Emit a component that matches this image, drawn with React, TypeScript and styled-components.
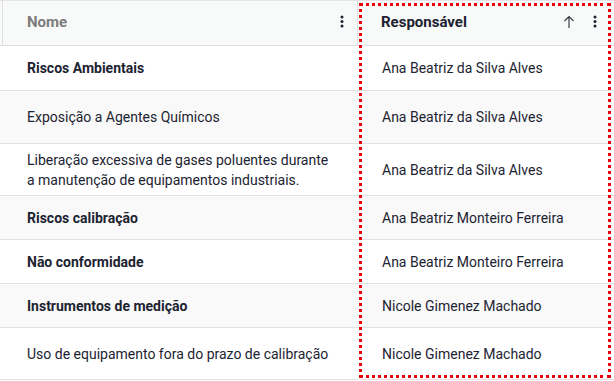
import React from "react";
import styled, { createGlobalStyle } from "styled-components";

const GlobalStyle = createGlobalStyle`
  body {
    margin: 0;
    background: #ffffff;
    font-family: Roboto, "Liberation Sans", sans-serif;
  }
`;

const GridWrapper = styled.div`
  position: relative;
  width: 614px;
  height: 381px;
  overflow: hidden;
  background: #ffffff;
`;

const HeaderRow = styled.div`
  display: grid;
  grid-template-columns: 356px 1fr;
  height: 46px;
  box-sizing: border-box;
  padding-left: 2px;
  background: #f8f9f9;
  border-top: 1px solid #e4e4e4;
  border-bottom: 1px solid #e0e0e0;
`;

const HeaderCell = styled.div<{ $sorted?: boolean; $first?: boolean }>`
  display: flex;
  align-items: center;
  gap: 8px;
  padding: 0 ${(p) => (p.$first ? 6 : 10)}px 3px ${(p) => (p.$first ? 24 : 23)}px;
  border-left: ${(p) => (p.$first ? "1px solid #e0e0e0" : "none")};
  border-right: ${(p) => (p.$first ? "1px solid #e0e0e0" : "none")};
  font-size: 15px;
  font-weight: 700;
  color: ${(p) => (p.$sorted ? "#1b2130" : "#7b7b7b")};
`;

const HeaderTitle = styled.span`
  flex: 1;
  white-space: nowrap;
`;

const IconSlot = styled.span`
  display: inline-flex;
  align-items: center;
  justify-content: center;
  width: 18px;
  height: 18px;
  color: #1b2130;
`;

const Row = styled.div<{ $h: number; $striped?: boolean }>`
  display: grid;
  grid-template-columns: 358px 1fr;
  height: ${(p) => p.$h}px;
  box-sizing: border-box;
  border-bottom: 1px solid #e2e2e2;
  background: ${(p) => (p.$striped ? "#f9f9f9" : "#ffffff")};
`;

const Cell = styled.div<{ $bold?: boolean; $first?: boolean }>`
  display: flex;
  align-items: center;
  padding: 0 24px 0 ${(p) => (p.$first ? 27 : 24)}px;
  font-size: 14px;
  line-height: 20px;
  font-weight: ${(p) => (p.$bold ? 700 : 400)};
  color: #1c2331;
`;

const FocusOutline = styled.div`
  position: absolute;
  left: 359px;
  top: 3px;
  width: 252px;
  height: 375px;
  box-sizing: border-box;
  border: 3px dotted #e8000b;
  pointer-events: none;
`;

const MoreVert = () => (
  <svg width="4" height="13" viewBox="0 0 4 13">
    <circle cx="2" cy="2" r="1.5" fill="currentColor" />
    <circle cx="2" cy="6.5" r="1.5" fill="currentColor" />
    <circle cx="2" cy="11" r="1.5" fill="currentColor" />
  </svg>
);

const ArrowUp = () => (
  <svg width="12" height="14" viewBox="0 0 12 14">
    <path
      d="M6 13V1.5M1.5 6L6 1.5L10.5 6"
      fill="none"
      stroke="#3a3a4a"
      strokeWidth="1.2"
    />
  </svg>
);

type Risk = { name: string; owner: string; bold?: boolean; h: number };

const rows: Risk[] = [
  { name: "Riscos Ambientais", owner: "Ana Beatriz da Silva Alves", bold: true, h: 45 },
  { name: "Exposição a Agentes Químicos", owner: "Ana Beatriz da Silva Alves", h: 53 },
  {
    name: "Liberação excessiva de gases poluentes durante a manutenção de equipamentos industriais.",
    owner: "Ana Beatriz da Silva Alves",
    h: 52,
  },
  { name: "Riscos calibração", owner: "Ana Beatriz Monteiro Ferreira", bold: true, h: 44 },
  { name: "Não conformidade", owner: "Ana Beatriz Monteiro Ferreira", bold: true, h: 44 },
  { name: "Instrumentos de medição", owner: "Nicole Gimenez Machado", bold: true, h: 44 },
  { name: "Uso de equipamento fora do prazo de calibração", owner: "Nicole Gimenez Machado", h: 52 },
];

export default function App() {
  return (
    <>
      <GlobalStyle />
      <GridWrapper>
        <HeaderRow>
          <HeaderCell $first>
            <HeaderTitle>Nome</HeaderTitle>
            <IconSlot>
              <MoreVert />
            </IconSlot>
          </HeaderCell>
          <HeaderCell $sorted>
            <HeaderTitle>Responsável</HeaderTitle>
            <IconSlot>
              <ArrowUp />
            </IconSlot>
            <IconSlot>
              <MoreVert />
            </IconSlot>
          </HeaderCell>
        </HeaderRow>
        {rows.map((r, i) => (
          <Row key={r.name} $h={r.h} $striped={i % 2 === 1}>
            <Cell $first $bold={r.bold}>
              {r.name}
            </Cell>
            <Cell>{r.owner}</Cell>
          </Row>
        ))}
        <FocusOutline />
      </GridWrapper>
    </>
  );
}
